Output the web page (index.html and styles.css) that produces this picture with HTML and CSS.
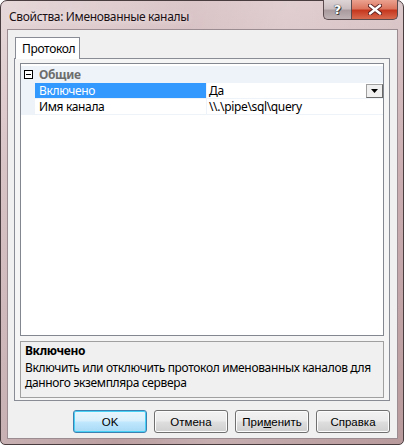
FILE: index.html
```html
<!DOCTYPE html>
<html lang="ru">
<head>
<meta charset="utf-8">
<title>Свойства: Именованные каналы</title>
<link rel="stylesheet" href="styles.css">
</head>
<body>
<div class="window">
  <div class="titlebar">
    <span class="title">Свойства: Именованные каналы</span>
    <div class="caption-btns">
      <div class="cbtn help">?</div>
      <div class="cbtn close">
        <svg width="14" height="11" viewBox="0 0 14 11">
          <path d="M2 1.5 L12 9.5 M12 1.5 L2 9.5" stroke="#5a2020" stroke-width="4.2" stroke-linecap="round"/>
          <path d="M2 1.5 L12 9.5 M12 1.5 L2 9.5" stroke="#ffffff" stroke-width="2.4" stroke-linecap="round"/>
        </svg>
      </div>
    </div>
  </div>
  <div class="client">
    <div class="tabs"><div class="tab">Протокол</div></div>
    <div class="tabpage">
      <div class="grid">
        <div class="row cat">
          <div class="margin"><span class="toggle"></span></div>
          <div class="cat-label">Общие</div>
        </div>
        <div class="row">
          <div class="margin"></div>
          <div class="name sel">Включено</div>
          <div class="value">Да<span class="dd"><svg width="7" height="4" viewBox="0 0 7 4"><path d="M0 0 H7 L3.5 4 Z" fill="#000"/></svg></span></div>
        </div>
        <div class="row">
          <div class="margin"></div>
          <div class="name">Имя канала</div>
          <div class="value">\\.\pipe\sql\query</div>
        </div>
        <div class="grid-fill"></div>
      </div>
      <div class="desc">
        <div class="desc-title">Включено</div>
        <div class="desc-text">Включить или отключить протокол именованных каналов для данного экземпляра сервера</div>
      </div>
    </div>
    <div class="buttons">
      <button class="btn default">OK</button>
      <button class="btn">Отмена</button>
      <button class="btn">При<u>м</u>енить</button>
      <button class="btn">Справка</button>
    </div>
  </div>
</div>
</body>
</html>
```

FILE: styles.css
```css
* { box-sizing: border-box; }
html, body { margin: 0; padding: 0; }
body {
  width: 405px;
  height: 447px;
  background: #ffffff;
  font-family: "Noto Sans", "DejaVu Sans", sans-serif;
  font-size: 12px;
  letter-spacing: -0.35px;
  color: #000;
  overflow: hidden;
}
.window {
  width: 404px;
  height: 445px;
  border: 1px solid #4a3d40;
  border-radius: 7px 7px 5px 5px;
  background:
    linear-gradient(100deg, rgba(255,255,255,0.35) 0%, rgba(255,255,255,0.05) 40%, rgba(255,255,255,0.2) 60%, rgba(255,255,255,0) 100%),
    linear-gradient(180deg, #d9c3c6 0%, #c7a9ac 40%, #b89a9c 100%);
  padding: 0 5px 5px 6px;
  display: flex;
  flex-direction: column;
}
.titlebar {
  height: 28px;
  display: flex;
  align-items: flex-start;
  justify-content: space-between;
}
.title {
  font-size: 12px;
  color: #1a1014;
  margin: 8px 0 0 2px;
  line-height: 16px;
  text-shadow: 0 0 6px rgba(255,255,255,0.8);
}
.caption-btns {
  display: flex;
  margin-top: -1px;
}
.cbtn {
  height: 20px;
  border: 1px solid #5b4a4e;
  border-top: none;
  display: flex;
  align-items: center;
  justify-content: center;
}
.help {
  width: 28px;
  border-radius: 0 0 0 5px;
  border-right: none;
  background: linear-gradient(180deg, #ded5d7 0%, #cbbec1 45%, #a99b9e 55%, #c0b3b6 100%);
  color: #fff;
  font-family: "DejaVu Sans", sans-serif;
  font-weight: bold;
  font-size: 13px;
  letter-spacing: 0;
  text-shadow: 0 0 1px #333, 0 0 1px #333, 1px 1px 0 #444;
}
.close {
  width: 47px;
  border-radius: 0 0 5px 0;
  background: linear-gradient(180deg, #eba290 0%, #dc7660 45%, #c5381f 55%, #d86a4e 100%);
}
.client {
  flex: 1;
  background: #f0f0f0;
  border: 1px solid #9a8c90;
  padding: 7px 7px 0 6px;
  display: flex;
  flex-direction: column;
}
.tabs {
  display: flex;
  height: 22px;
  margin-bottom: -1px;
  position: relative;
  z-index: 1;
}
.tab {
  margin-left: 1px;
  width: 65px;
  height: 22px;
  background: #ffffff;
  border: 1px solid #898c95;
  border-bottom: none;
  padding: 3px 0 0 6px;
  line-height: 15px;
}
.tabpage {
  height: 343px;
  border: 1px solid #898c95;
  padding: 4px 5px 2px 5px;
  display: flex;
  flex-direction: column;
  background: #f5f5f5;
}
.grid {
  height: 273px;
  border: 1px solid #828790;
  background: #ffffff;
  padding-top: 2px;
  display: flex;
  flex-direction: column;
}
.row {
  display: flex;
  height: 16px;
  line-height: 15px;
  border-bottom: 1px solid #eef3fa;
}
.row.cat {
  background: #eef3fa;
  border-bottom: none;
  height: 17px;
  padding-top: 1px;
}
.margin {
  width: 14px;
  flex: none;
  background: #eef3fa;
  display: flex;
  align-items: center;
  justify-content: center;
}
.toggle {
  width: 9px;
  height: 9px;
  border: 1px solid #000;
  background: #fff;
  position: relative;
  margin-top: -2px;
}
.toggle::after {
  content: "";
  position: absolute;
  left: 1px;
  top: 3px;
  width: 5px;
  height: 1px;
  background: #000;
}
.cat-label {
  font-weight: bold;
  color: #6d6d6d;
  padding-left: 4px;
}
.name {
  width: 172px;
  flex: none;
  padding-left: 4px;
  border-right: 1px solid #eef3fa;
}
.name.sel {
  background: #3399ff;
  color: #ffffff;
}
.value {
  flex: 1;
  padding-left: 2px;
  display: flex;
  justify-content: space-between;
}
.dd {
  width: 17px;
  height: 14px;
  margin-top: 1px;
  border: 1px solid #a0a0a0;
  border-right-color: #696969;
  border-bottom-color: #696969;
  background: #f0f0f0;
  display: flex;
  align-items: center;
  justify-content: center;
}
.grid-fill { flex: 1; }
.desc {
  margin-top: 5px;
  height: 57px;
  border: 1px solid #a0a0a0;
  background: #f0f0f0;
  padding: 1px 4px 0 4px;
  line-height: 15px;
}
.desc-title {
  font-weight: bold;
  margin-bottom: 2px;
}
.buttons {
  display: flex;
  justify-content: flex-end;
  gap: 7px;
  margin-top: 9px;
}
.btn {
  width: 74px;
  height: 23px;
  font-family: "Liberation Sans", Arial, sans-serif;
  font-size: 11.5px;
  letter-spacing: 0;
  color: #000;
  border: 1px solid #707070;
  border-radius: 3px;
  background: linear-gradient(180deg, #f2f2f2 0%, #ebebeb 45%, #dddddd 55%, #cfcfcf 100%);
  box-shadow: inset 0 0 0 1px #fcfcfc;
  padding: 0;
}
.btn u { text-decoration: underline; }
.btn.default {
  border-color: #3c7fb1;
  background: linear-gradient(180deg, #eaf6fd 0%, #d9f0fc 45%, #bee6fd 55%, #a7d9f5 100%);
  box-shadow: inset 0 0 0 1px #48d0f5;
}
```
